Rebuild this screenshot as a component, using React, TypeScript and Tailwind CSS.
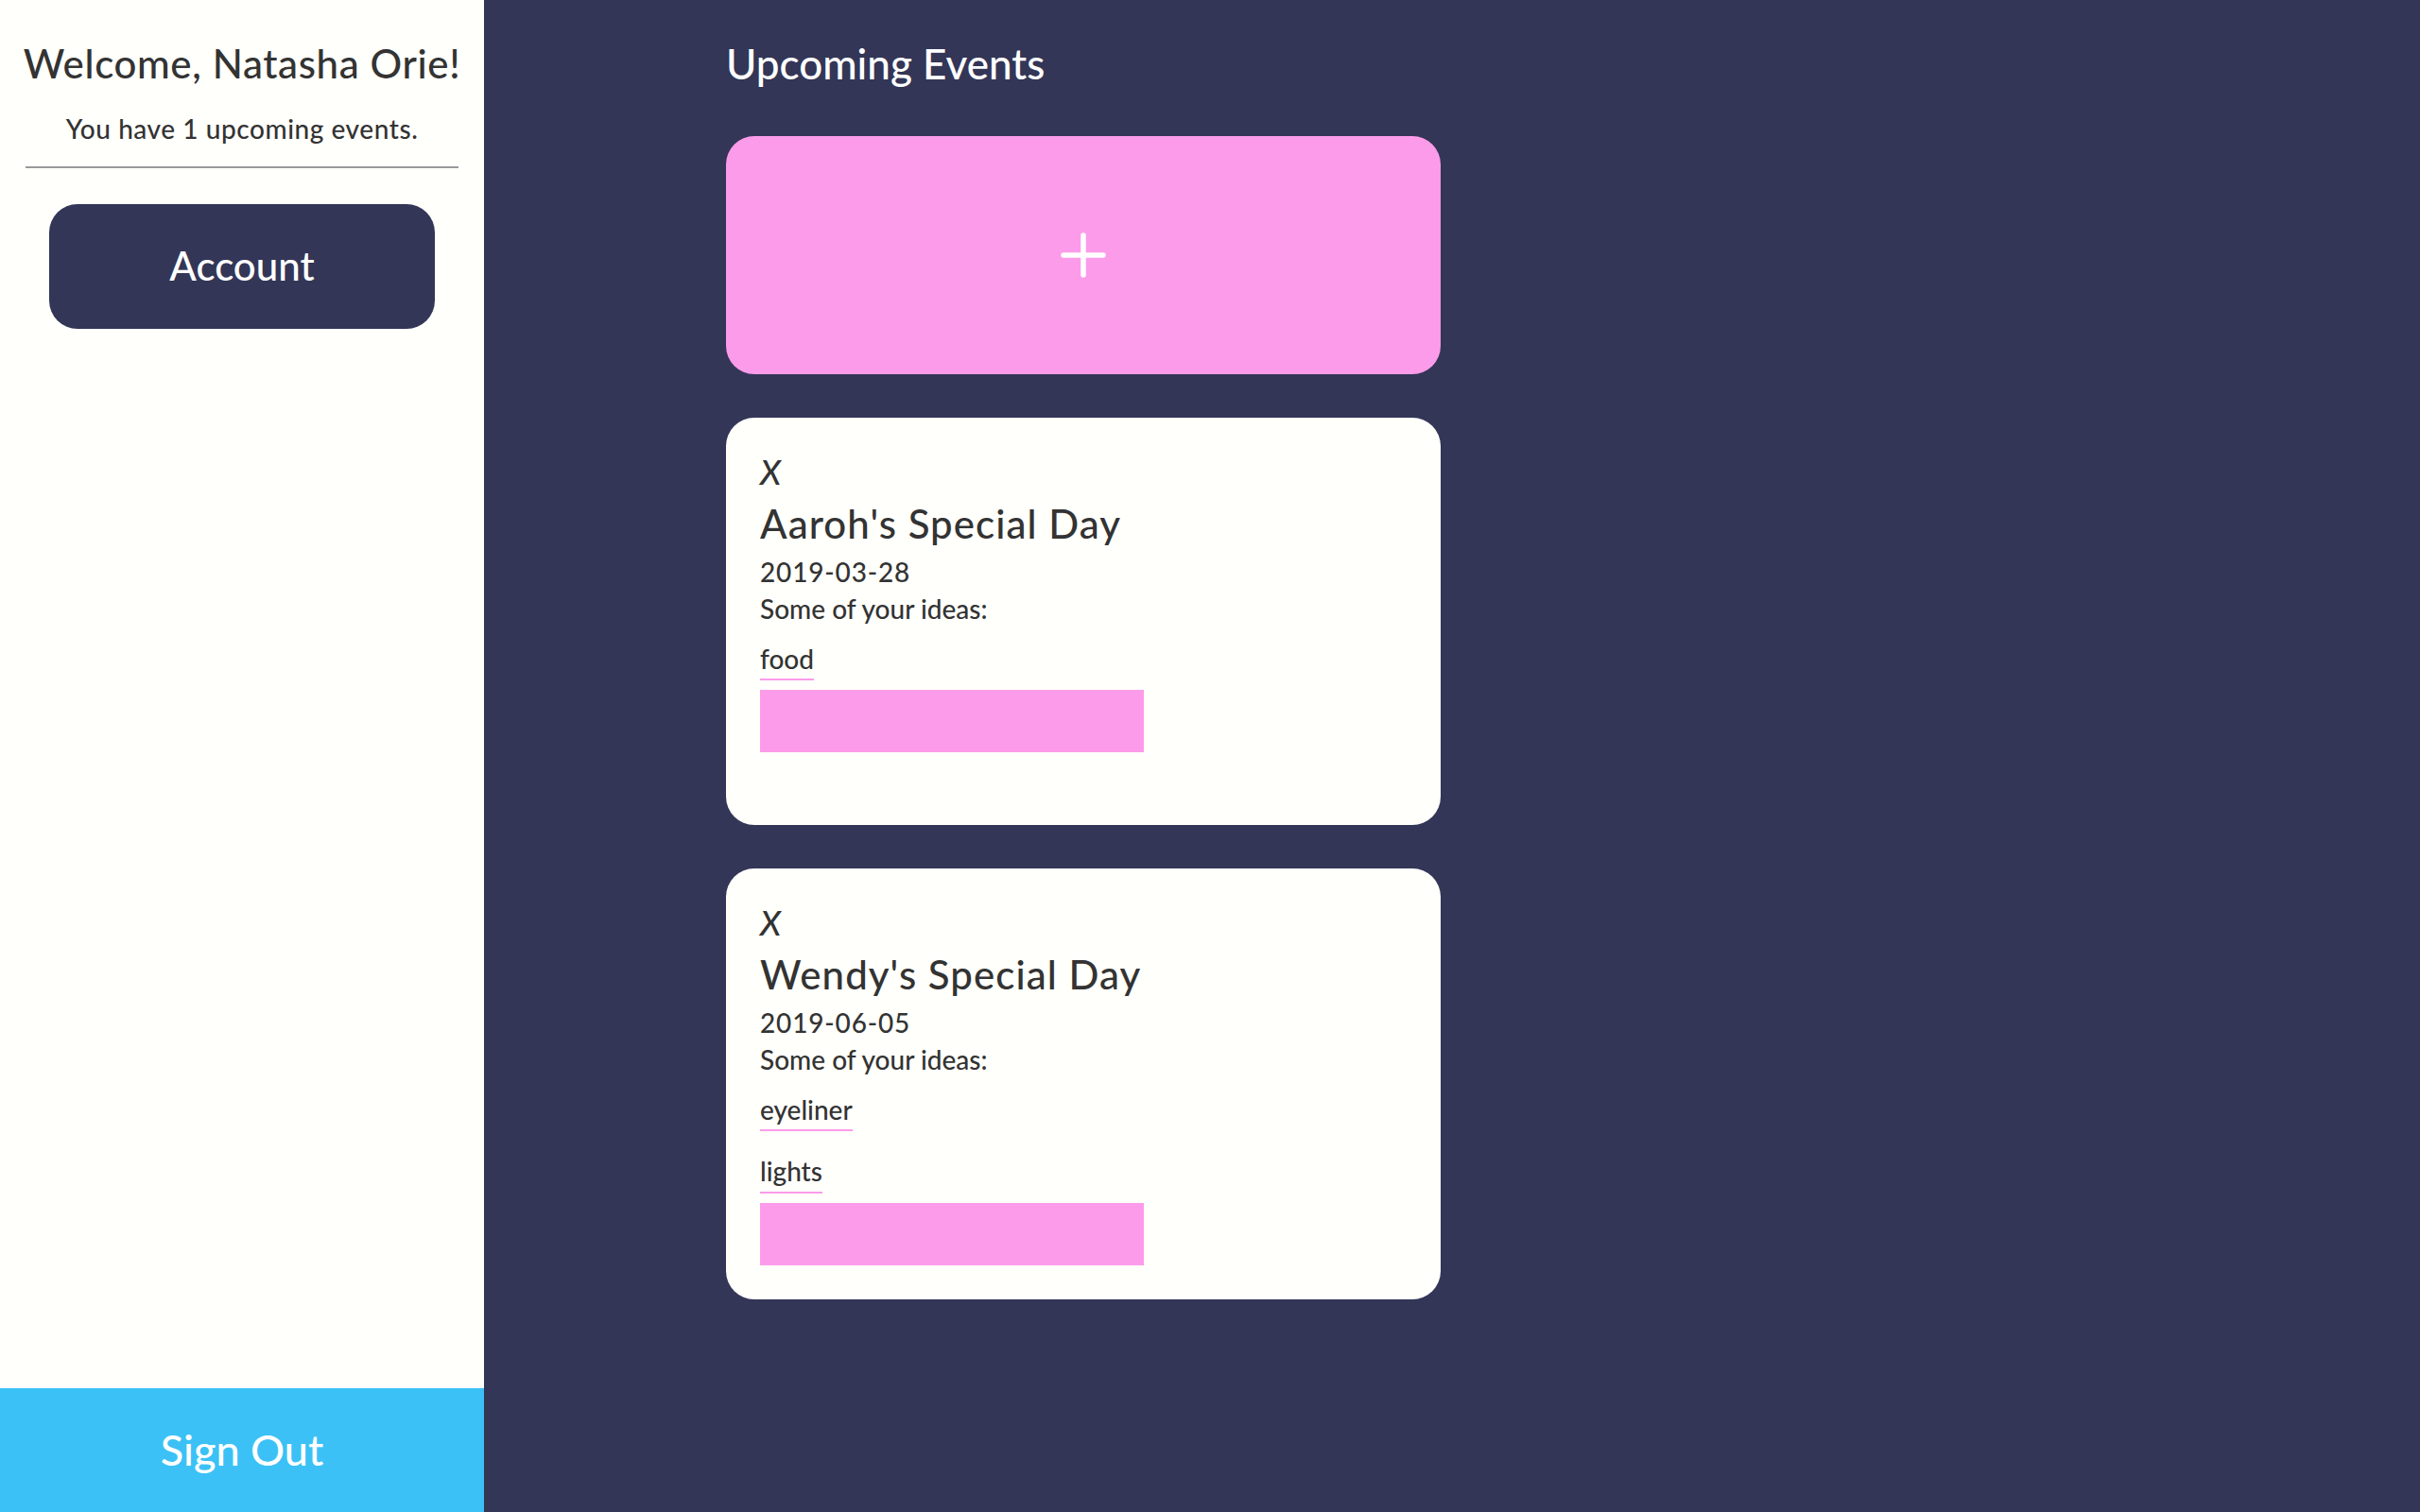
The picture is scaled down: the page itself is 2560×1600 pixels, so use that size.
import React from 'react';

const events = [
  { name: "Aaroh's Special Day", date: '2019-03-28', ideas: ['food'] },
  { name: "Wendy's Special Day", date: '2019-06-05', ideas: ['eyeliner', 'lights'] },
];

function PlusIcon() {
  return (
    <svg width="48" height="48" viewBox="0 0 48 48" fill="none">
      <path d="M24 3v42M3 24h42" stroke="#ffffff" strokeWidth="5.5" strokeLinecap="round" />
    </svg>
  );
}

function EventCard({ name, date, ideas }: { name: string; date: string; ideas: string[] }) {
  return (
    <div className="min-h-[431px] w-[756px] rounded-[30px] bg-[#fffffb] pl-[36px] pr-[36px] pt-[36px] pb-[36px] text-[#333333]">
      <div className="text-[36px] italic leading-[1.2]">X</div>
      <h3 className="mt-[8px] text-[42px] leading-[1.2] tracking-[0.025em]">{name}</h3>
      <p className="mt-[10px] text-[28px] leading-[1.2] tracking-[0.03em]">{date}</p>
      <p className="mt-[5px] text-[28px] leading-[1.2]">Some of your ideas:</p>
      <div className="mt-[19px] flex flex-col items-start gap-[26px]">
        {ideas.map((idea) => (
          <span key={idea} className="border-b-2 border-[#fc9bea] pb-[4px] text-[28px] leading-[1.2]">
            {idea}
          </span>
        ))}
      </div>
      <div className="mt-[10px] h-[66px] w-[406px] bg-[#fc9bea]" />
    </div>
  );
}

export default function App() {
  return (
    <div className="flex h-[1600px] w-[2560px] font-['Lato','Open_Sans',sans-serif] font-medium">
      {/* Sidebar */}
      <aside className="flex w-[512px] shrink-0 flex-col bg-[#fffffb] text-[#333333]">
        <div className="flex flex-1 flex-col items-center pt-[42px]">
          <h2 className="text-[42px] leading-[1.2] tracking-[0.015em]">Welcome, Natasha Orie!</h2>
          <p className="mt-[28px] text-[28px] leading-[1.2] tracking-[0.02em]">You have 1 upcoming events.</p>
          <div className="mt-[22px] h-[2px] w-[458px] bg-[#9a9a9a]" />
          <button className="mt-[38px] flex h-[132px] w-[408px] items-center justify-center rounded-[30px] bg-[#333657] text-[42px] text-white">
            Account
          </button>
        </div>
        <button className="flex h-[131px] w-full items-center justify-center bg-[#3bc1f6] text-[45px] text-white">
          Sign Out
        </button>
      </aside>

      {/* Main */}
      <main className="flex-1 bg-[#333657] pl-[256px] pt-[41px]">
        <h1 className="text-[44px] leading-[1.2] text-white">Upcoming Events</h1>
        <div className="mt-[50px] flex flex-col gap-[46px]">
          <button className="flex h-[252px] w-[756px] items-center justify-center rounded-[30px] bg-[#fc9bea]">
            <PlusIcon />
          </button>
          {events.map((ev) => (
            <EventCard key={ev.name} {...ev} />
          ))}
        </div>
      </main>
    </div>
  );
}
